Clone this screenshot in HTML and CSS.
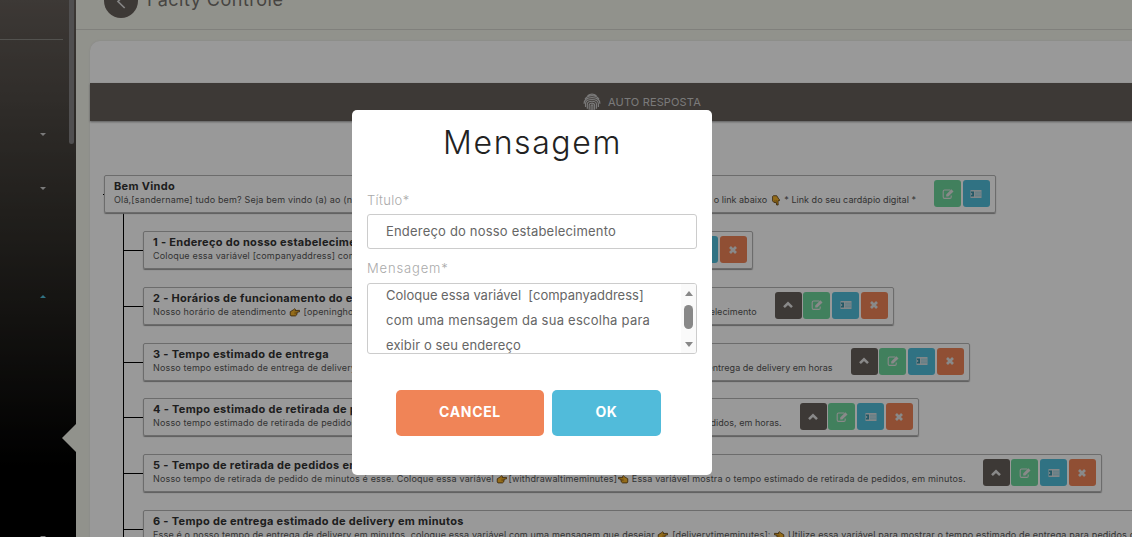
FILE: index.html
```html
<!DOCTYPE html>
<html lang="pt-BR">
<head>
<meta charset="utf-8">
<title>Facity Controle</title>
<link rel="stylesheet" href="styles.css">
</head>
<body>
<svg class="symbols" aria-hidden="true">
  <symbol id="up" viewBox="0 0 12 12"><path d="M2 8.2 6 4.3 10 8.2" fill="none" stroke="currentColor" stroke-width="2.5"/></symbol>
  <symbol id="edit" viewBox="0 0 12 12"><path d="M8.3 2H2.6Q1.2 2 1.2 3.4V9Q1.2 10.4 2.6 10.4H7.8Q9.2 10.4 9.2 9V7.5" fill="none" stroke="currentColor" stroke-width="1.1"/><path d="M4.2 8.6V6.5L9.4 1.3 11.5 3.4 6.3 8.6Z" fill="currentColor"/></symbol>
  <symbol id="indent" viewBox="0 0 12 12"><path d="M.5 2H11.5V10H.5Z" fill="currentColor" opacity=".9"/><path d="M1 3.6H4V8.4H1V7.2L2.7 6 1 4.8Z" fill="#3d93aa"/><path d="M5 4.2H11M5 6H11M5 7.8H11" stroke="#51bedb" stroke-width=".45"/></symbol>
  <symbol id="close" viewBox="0 0 12 12"><path d="M3 3 9 9M9 3 3 9" stroke="currentColor" stroke-width="2.7"/></symbol>
  <symbol id="hand" viewBox="0 0 12 10"><path d="M.7 4.2 4.2 2 5.5.8 6.5 1.5 6.2 2.8 11 2.6V4.3L8.5 4.6 8 7.5 6.5 8.8H1.5L.7 7.8Z" fill="#f7b52c" stroke="#5a3d12" stroke-width=".9"/><path d="M5.3 4.7H8.4M5.3 6.3H8" stroke="#8a5b16" stroke-width=".6"/></symbol>
</svg>
<div class="app">
  <aside class="sidebar">
    <div class="divider"></div>
    <i class="caret caret-one"></i><i class="caret caret-two"></i><i class="caret caret-open"></i><i class="caret caret-last"></i>
    <div class="scrollbar"></div>
    <div class="pointer"></div>
  </aside>
  <main class="main">
    <header class="header">
      <span class="back"><svg viewBox="0 0 34 34"><path d="M20 11 14 17.5 20.7 24" fill="none" stroke="#ddd" stroke-width="1.7"/></svg></span>
      <h1 class="page-title">Facity Controle</h1>
    </header>
    <section class="panel">
      <div class="tab">
        <svg class="finger" viewBox="0 0 20 20" fill="none" stroke="currentColor" stroke-width="1.3"><path d="M5 3Q10-.5 15 3M2.2 7Q4.7 3 10 3T17.8 7M1.2 12Q1.3 5.2 10 5.2T18.8 12M2.8 15.5V11.5Q3.2 7.2 10 7.2T17.1 12V15.5M4.8 17.5V12Q5.3 9.2 10 9.2T15 12.5V17.4M6.9 18.5V13Q7.4 11.2 10 11.2T12.9 13.5V18.5M9 19V14Q10 12.5 11 14V19"/></svg>
        <span>AUTO RESPOSTA</span>
      </div>
      <div class="tree">
        <article class="card card-root">
          <div class="copy"><h2>Bem Vindo</h2><div class="line"><p>Olá,[sandername] tudo bem? Seja bem vindo (a) ao (n</p><p class="tail">o link abaixo <svg class="hand down"><use href="#hand"/></svg> * Link do seu cardápio digital *</p></div></div>
          <div class="actions"><b class="btn green"><svg><use href="#edit"/></svg></b><b class="btn blue"><svg><use href="#indent"/></svg></b></div>
        </article>
        <div class="branch">
          <article class="card c1">
            <div class="copy"><h2>1 - Endereço do nosso estabelecimento</h2><div class="line"><p>Coloque essa variável [companyaddress] com</p></div></div>
            <div class="actions"><b class="btn dark"><svg><use href="#up"/></svg></b><b class="btn green"><svg><use href="#edit"/></svg></b><b class="btn blue"><svg><use href="#indent"/></svg></b><b class="btn orange"><svg><use href="#close"/></svg></b></div>
          </article>
          <article class="card c2">
            <div class="copy"><h2>2 - Horários de funcionamento do estabelecimento</h2><div class="line"><p>Nosso horário de atendimento <svg class="hand"><use href="#hand"/></svg> [openingho</p><p class="tail">estabelecimento</p></div></div>
            <div class="actions"><b class="btn dark"><svg><use href="#up"/></svg></b><b class="btn green"><svg><use href="#edit"/></svg></b><b class="btn blue"><svg><use href="#indent"/></svg></b><b class="btn orange"><svg><use href="#close"/></svg></b></div>
          </article>
          <article class="card c3">
            <div class="copy"><h2>3 - Tempo estimado de entrega</h2><div class="line"><p>Nosso tempo estimado de entrega de delivery</p><p class="tail">entrega de delivery em horas</p></div></div>
            <div class="actions"><b class="btn dark"><svg><use href="#up"/></svg></b><b class="btn green"><svg><use href="#edit"/></svg></b><b class="btn blue"><svg><use href="#indent"/></svg></b><b class="btn orange"><svg><use href="#close"/></svg></b></div>
          </article>
          <article class="card c4">
            <div class="copy"><h2>4 - Tempo estimado de retirada de pedidos</h2><div class="line"><p>Nosso tempo estimado de retirada de pedidos</p><p class="tail">pedidos, em horas.</p></div></div>
            <div class="actions"><b class="btn dark"><svg><use href="#up"/></svg></b><b class="btn green"><svg><use href="#edit"/></svg></b><b class="btn blue"><svg><use href="#indent"/></svg></b><b class="btn orange"><svg><use href="#close"/></svg></b></div>
          </article>
          <article class="card c5">
            <div class="copy"><h2>5 - Tempo de retirada de pedidos em minutos</h2><div class="line"><p>Nosso tempo de retirada de pedido de minutos é esse. Coloque essa variável <svg class="hand"><use href="#hand"/></svg>[withdrawaltimeminutes]<svg class="hand left"><use href="#hand"/></svg> Essa variável mostra o tempo estimado de retirada de pedidos, em minutos.</p></div></div>
            <div class="actions"><b class="btn dark"><svg><use href="#up"/></svg></b><b class="btn green"><svg><use href="#edit"/></svg></b><b class="btn blue"><svg><use href="#indent"/></svg></b><b class="btn orange"><svg><use href="#close"/></svg></b></div>
          </article>
          <article class="card c6">
            <div class="copy"><h2>6 - Tempo de entrega estimado de delivery em minutos</h2><div class="line"><p>Esse é o nosso tempo de entrega de delivery em minutos, coloque essa variável com uma mensagem que desejar <svg class="hand"><use href="#hand"/></svg> [deliverytimeminutes]: <svg class="hand left"><use href="#hand"/></svg> Utilize essa variável para mostrar o tempo estimado de entrega para pedidos de delivery</p></div></div>
          </article>
        </div>
      </div>
    </section>
  </main>
</div>
<div class="overlay">
  <div class="modal" role="dialog">
    <h2 class="modal-title">Mensagem</h2>
    <div class="label">Título*</div>
    <div class="input"><span>Endereço do nosso estabelecimento</span></div>
    <div class="label label-message">Mensagem*</div>
    <div class="textarea">
      <div class="message"><div>Coloque essa variável&nbsp; [companyaddress]</div><div class="m2">com uma mensagem da sua escolha para</div><div class="m3">exibir o seu endereço</div></div>
      <div class="track"><i class="arrow-up"></i><i class="thumb"></i><i class="arrow-down"></i></div>
    </div>
    <div class="buttons"><button class="cancel">CANCEL</button><button class="ok">OK</button></div>
  </div>
</div>
</body>
</html>
```

FILE: styles.css
```css
* { box-sizing: border-box; }
body { margin: 0; width: 1132px; height: 537px; overflow: hidden; font-family: Inter, "Open Sans", sans-serif; background: #f2f3e9; }
h1, h2, p { margin: 0; }
.symbols { display: none; }
.app { display: flex; width: 1132px; height: 537px; overflow: hidden; }
.sidebar { position: relative; flex: 0 0 76px; background: linear-gradient(#665f5a 0, #37342f 215px, #000 470px); }
.divider { width: 63px; height: 1px; margin-top: 39px; background: #8b8984; }
.scrollbar { position: absolute; left: 69px; top: 0; width: 5px; height: 144px; border-radius: 0 0 3px 3px; background: #858485; }
.pointer { position: absolute; right: 0; top: 424px; border: 14px solid transparent; border-right-color: #f2f3e9; border-left: 0; }
.caret { position: absolute; left: 40px; border: 3px solid transparent; border-top-color: #ccc; border-bottom: 0; }
.caret-one { top: 133px; }
.caret-two { top: 187px; }
.caret-open { top: 295px; border-bottom: 3px solid #51bedb; border-top: 0; }
.caret-last { top: 536px; }
.main { flex: 1; min-width: 0; }
.header { display: flex; height: 30px; padding-left: 28px; border-bottom: 1px solid #d6d6cf; }
.back { width: 34px; height: 34px; margin-top: -16px; border-radius: 50%; background: #675f5a; }
.back svg { display: block; width: 34px; height: 34px; }
.page-title { margin: -12px 0 0 9px; font-size: 18px; line-height: 24px; font-weight: 400; letter-spacing: .5px; color: #77736e; }
.panel { margin: 11px 0 0 14px; height: 510px; padding-top: 42px; background: #fff; border-radius: 10px 0 0; box-shadow: 0 0 2px #ddd; }
.tab { display: flex; align-items: center; height: 38px; padding-left: 493px; gap: 7px; background: #675f5a; color: #ccc; font-size: 11px; letter-spacing: .16px; box-shadow: 0 1px 2px #999; }
.finger { width: 18px; height: 18px; }
.tree { padding: 54px 0 0 14px; }
.card { position: relative; display: flex; align-items: flex-start; height: 38px; padding: 4px 5.3px 0 9px; border: 1px solid #b4b4b4; border-radius: 2px; box-shadow: 0 1px 1px #999; color: #555; }
.card-root { width: 892px; }
.card-root::before { content: ""; position: absolute; left: -2px; top: 18px; width: 1px; height: 1px; background: #000; }
.branch { display: flex; flex-direction: column; gap: 17.8px; margin-left: 19px; padding: 18px 0 0 19px; border-left: 1px solid #000; }
.branch .card::before { content: ""; position: absolute; left: -20px; top: 18px; width: 19px; height: 1px; background: #000; }
.copy { flex: 1; min-width: 0; }
.card h2 { font-size: 11px; line-height: 13px; font-weight: 700; color: #333; white-space: nowrap; letter-spacing: .31px; }
.line { display: flex; justify-content: space-between; }
.line p { flex: none; font-size: 9px; line-height: 14px; white-space: nowrap; letter-spacing: .165px; }
.line .tail { letter-spacing: .03px; }
.actions { display: flex; gap: 1.7px; margin-left: 18px; }
.btn { display: flex; justify-content: center; align-items: center; width: 27px; height: 27px; border-radius: 3px; color: #e5e5e5; }
.btn svg { width: 12px; height: 12px; }
.green { background: #6dd69c; }
.blue { background: #51bedb; }
.orange { background: #f08457; }
.dark { background: #675f5a; }
.c1 { width: 610px; }
.c2 { width: 751px; }
.c3 { width: 827px; }
.c4 { width: 776px; }
.c5 { width: 959px; }
.c6 { width: 1200px; }
.hand { display: inline-block; width: 12px; height: 9px; vertical-align: -2px; }
.hand.left { transform: scaleX(-1); }
.hand.down { transform: rotate(90deg); }
.overlay { position: absolute; inset: 0; background: rgba(0,0,0,.4); }
.modal { width: 360px; height: 365px; margin: 110px 0 0 352px; padding: 15px 15px 0; border-radius: 5px; background: #fff; }
.modal-title { height: 36px; line-height: 36px; padding-left: 1px; text-align: center; font-size: 32px; font-weight: 300; color: #222; letter-spacing: 1.6px; }
.label { margin-top: 29px; height: 20px; line-height: 20px; font-size: 13px; font-weight: 300; color: #aaa; letter-spacing: .35px; }
.input { display: flex; width: 330px; height: 35px; margin-top: 4px; padding-left: 18px; border: 1px solid #ccc; border-radius: 3px; font-size: 13px; line-height: 32px; letter-spacing: .19px; color: #666; }
.label-message { margin-top: 9px; letter-spacing: .85px; }
.textarea { display: flex; width: 330px; height: 71px; margin-top: 5px; border: 1px solid #ccc; border-radius: 3px; overflow: hidden; }
.message { flex: 1; margin-top: -1px; padding-left: 18px; font-size: 13px; line-height: 25px; color: #666; white-space: nowrap; }
.m2 { letter-spacing: .25px; }
.m3 { letter-spacing: .1px; }
.track { width: 15px; display: flex; flex-direction: column; align-items: center; background: #fafafa; }
.arrow-up, .arrow-down { border: 4.5px solid transparent; }
.arrow-up { margin-top: 7px; border-top: 0; border-bottom: 5px solid #888; }
.thumb { width: 9px; height: 24px; margin-top: 9px; border-radius: 5px; background: #888; }
.arrow-down { margin-top: 13px; border-bottom: 0; border-top: 5px solid #888; }
.buttons { display: flex; gap: 8px; margin: 36px 0 0 29px; }
.buttons button { height: 46px; padding: 0 0 3px; border: 0; border-radius: 5px; color: #fff; font: 700 14px Inter, sans-serif; letter-spacing: .65px; }
.cancel { width: 148px; background: #f08457; }
.ok { width: 109px; background: #51bbda; }
```
